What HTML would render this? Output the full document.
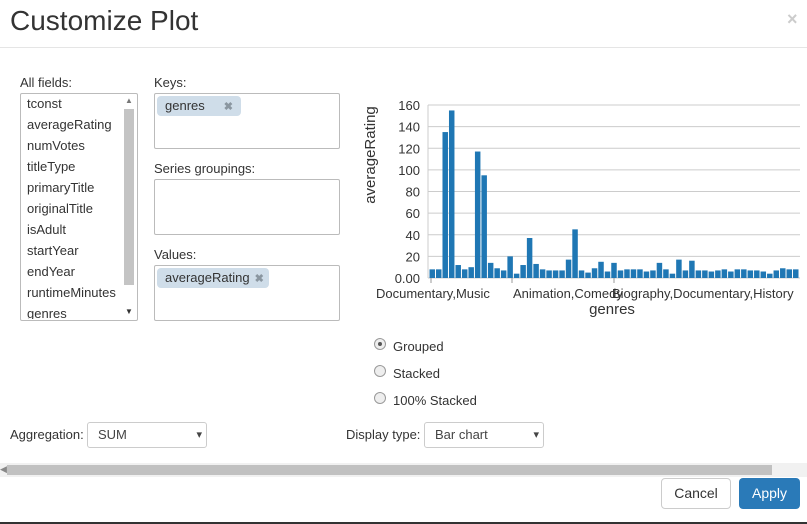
<!DOCTYPE html>
<html><head><meta charset="utf-8"><style>
body{margin:0;width:807px;height:524px;background:#fff;font-family:"Liberation Sans",sans-serif;color:#333;position:relative;overflow:hidden;font-size:13px}
.a{position:absolute}
.box{position:absolute;border:1px solid #bbb;border-radius:2px;background:#fff}
.tag{position:absolute;background:#cfdde9;border-radius:4px;height:20px;line-height:20px;padding:0 8px;font-size:13px}
.tag b{color:#8a96a0;font-size:11px;margin-left:12px}
.li{position:absolute;left:27px;font-size:13px}
.sel{position:absolute;border:1px solid #ccc;border-radius:3px;height:24px;line-height:24px;padding-left:10px;font-size:13px;color:#444}
.sel:after{content:"▾";position:absolute;right:4px;top:0;font-size:11px}
.rad{position:absolute;left:374px;width:10px;height:10px;border:1px solid #999;border-radius:50%;background:#eee}
</style></head><body>
<div class="a" style="left:10px;top:5px;font-size:28px;color:#333">Customize Plot</div>
<div class="a" style="left:787px;top:9px;font-size:18px;color:#ccc;font-weight:bold">×</div>
<div class="a" style="left:0;top:47px;width:807px;height:1px;background:#e5e5e5"></div>

<div class="a" style="left:20px;top:75px">All fields:</div>
<div class="box" style="left:20px;top:93px;width:116px;height:226px;overflow:hidden">
<div class="a" style="left:103px;top:15px;width:10px;height:176px;background:#c4c4c4"></div>
<div class="a" style="left:104px;top:2px;font-size:8px;color:#777">▲</div>
<div class="a" style="left:104px;top:213px;font-size:8px;color:#333">▼</div>
</div>
<div class="li" style="top:96px">tconst</div>
<div class="li" style="top:117px">averageRating</div>
<div class="li" style="top:138px">numVotes</div>
<div class="li" style="top:159px">titleType</div>
<div class="li" style="top:180px">primaryTitle</div>
<div class="li" style="top:201px">originalTitle</div>
<div class="li" style="top:222px">isAdult</div>
<div class="li" style="top:243px">startYear</div>
<div class="li" style="top:264px">endYear</div>
<div class="li" style="top:285px">runtimeMinutes</div>
<div class="li" style="top:306px;height:13px;overflow:hidden">genres</div>

<div class="a" style="left:154px;top:75px">Keys:</div>
<div class="box" style="left:154px;top:93px;width:184px;height:54px"></div>
<div class="tag" style="left:157px;top:96px">genres<b style="margin-left:19px">✖</b></div>
<div class="a" style="left:154px;top:161px">Series groupings:</div>
<div class="box" style="left:154px;top:179px;width:184px;height:54px"></div>
<div class="a" style="left:154px;top:247px">Values:</div>
<div class="box" style="left:154px;top:265px;width:184px;height:54px"></div>
<div class="tag" style="left:157px;top:268px;padding-right:5px">averageRating<b style="margin-left:5px">✖</b></div>

<svg class="a" style="left:0;top:0" width="807" height="330" id="ch" font-family="Liberation Sans" fill="#333">
<text x="375" y="155" font-size="15" transform="rotate(-90 375 155)" text-anchor="middle">averageRating</text>
<text x="612" y="314" font-size="15" text-anchor="middle">genres</text>
<text x="376" y="298" font-size="13">Documentary,Music</text>
<text x="513" y="298" font-size="13">Animation,Comedy</text>
<text x="612" y="298" font-size="13">Biography,Documentary,History</text>
</svg>

<div class="rad" style="top:338px"><div style="width:4px;height:4px;background:#555;border-radius:50%;margin:3px"></div></div>
<div class="a" style="left:393px;top:339px">Grouped</div>
<div class="rad" style="top:365px"></div>
<div class="a" style="left:393px;top:366px">Stacked</div>
<div class="rad" style="top:392px"></div>
<div class="a" style="left:393px;top:393px">100% Stacked</div>

<div class="a" style="left:10px;top:427px">Aggregation:</div>
<div class="sel" style="left:87px;top:422px;width:108px">SUM</div>
<div class="a" style="left:346px;top:427px">Display type:</div>
<div class="sel" style="left:424px;top:422px;width:108px">Bar chart</div>

<div class="a" style="left:0;top:463px;width:807px;height:14px;background:#f1f1f1"></div>
<div class="a" style="left:7px;top:465px;width:765px;height:10px;background:#c1c1c1"></div>
<div class="a" style="left:0;top:464px;font-size:9px;color:#888">◀</div>

<div class="a" style="left:661px;top:478px;width:68px;height:29px;border:1px solid #ccc;border-radius:4px;text-align:center;line-height:29px;font-size:14px;color:#333">Cancel</div>
<div class="a" style="left:739px;top:478px;width:61px;height:31px;background:#2a7ab8;border-radius:4px;text-align:center;line-height:31px;font-size:14px;color:#fff">Apply</div>
<div class="a" style="left:0;top:522px;width:807px;height:2px;background:#333"></div>

<script>
var s=document.getElementById('ch'),h='';
for(var v=0;v<=160;v+=20){var y=278-v*1.081;h+='<line x1="428" x2="800" y1="'+y+'" y2="'+y+'" stroke="#ccc"/><text x="420" y="'+(y+5)+'" font-size="13" text-anchor="end">'+(v==0?'0.00':v)+'</text>';}
h+='<line x1="428" x2="428" y1="105" y2="278" stroke="#ccc"/>';
var d=[8,8,135,155,12,8,10,117,95,14,9,7,20,4,12,37,13,8,7,7,7,17,45,7,5,9,15,6,14,7,8,8,8,6,7,14,8,4,17,7,16,7,7,6,7,8,6,8,8,7,7,6,4,7,9,8,8];
var w=370/d.length;
for(var i=0;i<d.length;i++){var bh=d[i]*1.081;h+='<rect x="'+(429.5+i*w)+'" y="'+(278-bh)+'" width="'+(w-1)+'" height="'+bh+'" fill="#1f77b4"/>';}
[431,512,614].forEach(function(x){h+='<line x1="'+x+'" x2="'+x+'" y1="278" y2="283" stroke="#999"/>';});
s.insertAdjacentHTML('beforeend',h);
</script>
</body></html>
